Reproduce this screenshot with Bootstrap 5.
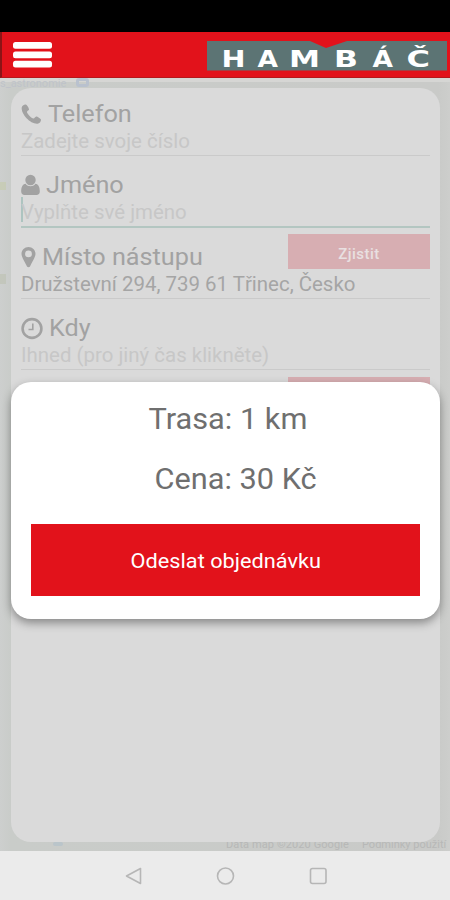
<!DOCTYPE html>
<html lang="cs">
<head>
<meta charset="utf-8">
<meta name="viewport" content="width=device-width, initial-scale=1">
<title>Hambáč</title>
<link href="https://cdn.jsdelivr.net/npm/bootstrap@5.3.0/dist/css/bootstrap.min.css" rel="stylesheet">
<style>
body{font-family:Roboto,sans-serif;background:#000;width:450px;height:900px}
svg{display:block;overflow:visible}
.statusbar{height:32px}
.topbar{height:46px;background:#e2121b;border-left:2px solid #8c1416;border-bottom:1px solid #b5181c;padding:0 3px 0 11px}
.map-area{background:linear-gradient(90deg,#cdcfce,#c9ccc9 11px,#c9cac8 438px,#cdcecc);padding:10px 10px 0 11px;height:773px}
.map-strip{left:0;right:0;top:0;height:4px;background:#d6d6d4}
.map-label{font-size:11px;line-height:12px;white-space:nowrap;color:#bfc3c9}
.lbl-top{left:0;top:0}
.lbl-pin{left:76px;top:0;width:13px;height:9px;border:3px solid #b9c1ce;border-radius:3px}
.lbl-copy{left:226px;top:761px;color:#b7b8b7;letter-spacing:.1px}
.lbl-terms{left:362px;top:761px;color:#b7b8b7}
.pin-low{left:53px;top:764px;width:10px;height:4px;background:#bac5ca;border-radius:3px}
.spot{left:0;width:6px;opacity:.6}
.spot-a{top:104px;height:8px;background:#c4ccaa}
.spot-b{top:196px;height:10px;background:#bcc2b0}
.form-card{background:#dadada;border-radius:20px;height:754px;padding:9.5px 10px 0;overflow:hidden}
.field{height:58px;margin-bottom:13.5px;border-bottom:1px solid #cacaca}
.field.active{border-bottom:2px solid #b3c6c1;height:59px;margin-bottom:12.5px}
.field-label{height:32px;line-height:35px;font-size:23.8px;color:#a2a2a2}
.field-value{height:22px;line-height:24px;font-size:19.3px;color:#c7c7c7;white-space:nowrap}
.field-value.filled{color:#a5a5a5}
/* slightly extended letterforms */
.wide{display:inline-block;transform:scaleX(1.06)}
.from-left{transform-origin:0 50%}
.field-label .wide{padding-top:1px}
.caret{left:0;top:28px;width:2px;height:25px;background:#adc4c0}
.btn-find{right:0;top:-7px;width:142px;height:35px;background:#d7aeb2;color:#e9e0e1;font-size:15px;font-weight:500;line-height:41px;letter-spacing:.5px}
.sheet{left:11px;top:382px;width:429px;height:237px;background:#fff;border-radius:20px;padding:6px 20px 0;box-shadow:0 4px 10px rgba(0,0,0,.38)}
.sheet-line{height:60px;line-height:62px;font-size:29px;color:#6f6f6f}
.sheet .route{padding-left:5px}
.sheet .price{padding-left:20px}
.btn-send{height:72px;margin-top:16px;background:#e2121b;color:#fff;font-size:20.5px;padding-top:2px}
.navkeys{height:49px;background:#ebebeb;gap:75px}
.gap-tight{gap:6px}
</style>
<script src="https://cdn.jsdelivr.net/npm/bootstrap@5.3.0/dist/js/bootstrap.bundle.min.js"></script>
</head>
<body class="m-0 overflow-hidden position-relative d-flex flex-column">
<div class="statusbar"></div>
<header class="topbar d-flex align-items-center justify-content-between">
  <svg width="39" height="26" viewBox="0 0 39 26"><g fill="#fff"><rect y="0" width="39" height="6.8" rx="2.5"/><rect y="9.4" width="39" height="6.8" rx="2.5"/><rect y="18.8" width="39" height="6.8" rx="2.5"/></g></svg>
  <svg width="240" height="30" viewBox="0 0 240 30">
    <path fill="#5c7474" d="M0 1H103L119 8L140 1H240V30.500H0Z"/>
    <g font-family="DejaVu Sans" font-weight="700" font-size="23" fill="#fff">
      <text x="14.500" y="27" textLength="24" lengthAdjust="spacingAndGlyphs">H</text>
      <text x="50.500" y="27" textLength="20.500" lengthAdjust="spacingAndGlyphs">A</text>
      <text x="82" y="27" textLength="31" lengthAdjust="spacingAndGlyphs">M</text>
      <text x="127" y="27" textLength="24" lengthAdjust="spacingAndGlyphs">B</text>
      <text x="165.500" y="27" textLength="20.500" lengthAdjust="spacingAndGlyphs">Á</text>
      <text x="199.500" y="27" textLength="23.500" lengthAdjust="spacingAndGlyphs">Č</text>
    </g>
  </svg>
</header>
<main class="map-area position-relative">
  <div class="map-strip position-absolute"></div>
  <span class="map-label lbl-top position-absolute">s_astronomie</span>
  <span class="lbl-pin position-absolute"></span>
  <span class="spot spot-a position-absolute"></span>
  <span class="spot spot-b position-absolute"></span>
  <span class="pin-low position-absolute"></span>
  <span class="map-label lbl-copy position-absolute">Data map ©2020 Google</span>
  <span class="map-label lbl-terms position-absolute">Podmínky použití</span>
  <section class="form-card position-relative">
    <div class="field">
      <div class="field-label d-flex align-items-center gap-tight">
        <svg width="21" height="22" viewBox="0 0 22 22"><path fill="#a2a2a2" d="M.7 4.500C.7 2.500 3.500 .8 5 1.100C6.300 1.500 8.600 5.300 8.400 6.400C8.100 7.500 6 8.200 6.200 9.100C7 11.300 10.800 15.100 13 15.800C14 16 14.800 13.900 15.900 13.700C17 13.600 20.600 15.800 21 16.900C21.100 18.700 19.200 21 17.400 21.200C10 21.800 .3 11.500 .7 4.500Z"/></svg>
        <span class="wide from-left">Telefon</span>
      </div>
      <div class="field-value"><span class="wide from-left">Zadejte svoje číslo</span></div>
    </div>
    <div class="field active position-relative">
      <div class="field-label d-flex align-items-center gap-tight">
        <svg width="19" height="22" viewBox="0 0 19 22"><g fill="#a2a2a2"><circle cx="9.500" cy="6" r="5.200"/><path d="M4.500 9.800C6 11.700 7.500 12.200 9.500 12.200S13 11.700 14.500 9.800C17.500 10.200 18.800 13.500 18.800 17.500C18.800 19.500 17.500 21 15.500 21H3.500C1.500 21 .2 19.500 .2 17.500C.2 13.500 1.500 10.200 4.500 9.800Z"/></g></svg>
        <span class="wide from-left">Jméno</span>
      </div>
      <span class="caret position-absolute"></span>
      <div class="field-value"><span class="wide from-left">Vyplňte své jméno</span></div>
    </div>
    <div class="field position-relative">
      <div class="field-label d-flex align-items-center gap-tight">
        <svg width="15" height="22" viewBox="0 0 14 22"><path fill="#a2a2a2" fill-rule="evenodd" d="M7 1C10.900 1 14 4 14 7.800C14 10.500 12 13.500 8.500 20.500C8 21.500 6 21.500 5.500 20.500C2 13.500 0 10.500 0 7.800C0 4 3.100 1 7 1ZM7 4.500A3.400 3.400 0 1 0 7 11.300A3.400 3.400 0 1 0 7 4.500Z"/></svg>
        <span class="wide from-left">Místo nástupu</span>
      </div>
      <div class="field-value filled"><span class="wide from-left">Družstevní 294, 739 61 Třinec, Česko</span></div>
      <div class="btn-find position-absolute text-center">Zjistit</div>
    </div>
    <div class="field">
      <div class="field-label d-flex align-items-center gap-tight">
        <svg width="22" height="22" viewBox="0 0 22 22"><g fill="none" stroke="#a2a2a2"><circle cx="11" cy="11.500" r="9.400" stroke-width="2.600"/><path d="M11.800 6.500V12.500H7.500" stroke-width="1.600"/></g></svg>
        <span class="wide from-left">Kdy</span>
      </div>
      <div class="field-value"><span class="wide from-left">Ihned (pro jiný čas klikněte)</span></div>
    </div>
    <div class="field position-relative"><div class="btn-find position-absolute"></div></div>
  </section>
</main>
<footer class="navkeys d-flex justify-content-center align-items-center">
  <svg width="18" height="18" viewBox="0 0 18 18"><path d="M17.500 1.500V16.500L3.500 9Z" fill="none" stroke="#b6b6b6" stroke-width="1.600" stroke-linejoin="round"/></svg>
  <svg width="18" height="18" viewBox="0 0 18 18"><circle cx="9.500" cy="9" r="8" fill="none" stroke="#b6b6b6" stroke-width="1.600"/></svg>
  <svg width="18" height="18" viewBox="0 0 18 18"><rect x="1.500" y="1.500" width="15.500" height="15" rx="2" fill="none" stroke="#b6b6b6" stroke-width="1.600"/></svg>
</footer>
<section class="sheet position-absolute text-center">
  <div class="sheet-line route"><span class="wide">Trasa: 1 km</span></div>
  <div class="sheet-line price"><span class="wide">Cena: 30 Kč</span></div>
  <button class="btn btn-send w-100 rounded-0 border-0 px-0 pb-0 d-flex align-items-center justify-content-center"><span class="wide">Odeslat objednávku</span></button>
</section>
</body>
</html>
